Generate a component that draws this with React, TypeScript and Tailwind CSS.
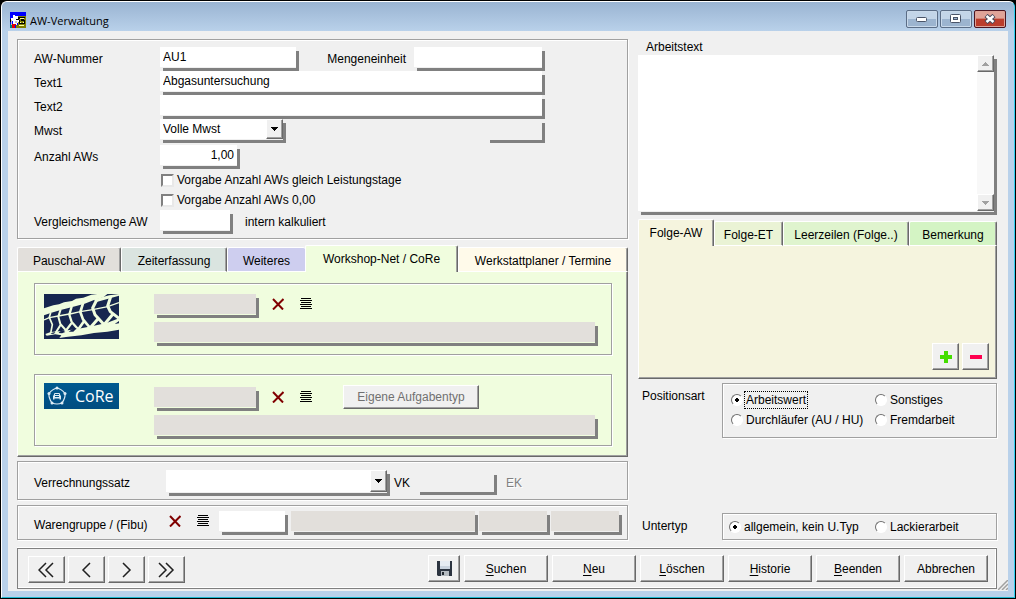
import { useState } from "react";
import type { ReactNode } from "react";

const group =
  "border border-[#a0a0a0] shadow-[1px_1px_0_#fff,inset_1px_1px_0_#fff]";
const raised =
  "border border-t-white border-l-white border-r-[#696969] border-b-[#696969] bg-[#f0f0f0] shadow-[inset_-1px_-1px_0_#a0a0a0]";
const field =
  "h-5 min-w-0 px-[3px] leading-5 outline-none shadow-[0_1px_0_#f0f0f0,3px_4px_0_#808080]";
const fieldGreen =
  "h-5 min-w-0 bg-[#e2dfdb] px-[3px] outline-none shadow-[0_1px_0_#f0fdde,3px_4px_0_#808080]";

function TitleIcon() {
  return (
    <svg width="16" height="16" viewBox="0 0 16 16" shapeRendering="crispEdges">
      <rect width="16" height="16" fill="#0000ff" />
      <path d="M8 4h8v12H6v-3h2z" fill="#808000" />
      <path d="M3 3h2v1h3v1h1v5H8v1H7v2H3V9H1V6h2z" fill="#fff" />
      <path d="M0 12h2v4H0z" fill="#008080" />
      <path d="M1 8h1v5H1zM5 9h2v2H5z" fill="#c0c0c0" />
      <path d="M2 12h4v1H5v3H2z" fill="#e00000" />
      <path
        d="M8 5h7v1h-5v1H8zM6 7h3v1H6zM9 8h1v3h4V8h1v4H9zM11 7h3v2h-3zM0 7h1v3H0z"
        fill="#000"
      />
      <path d="M10 6h4v1h-4zM10 10h1v1h-1zM13 10h1v1h-1zM9 13h5v1H9z" fill="#ffffa0" />
    </svg>
  );
}

function TyreLogo() {
  return (
    <svg width="75" height="45" viewBox="0 0 225 135" className="shrink-0">
      <rect width="225" height="135" fill="#16264f" />
      <g fill="#f0fdde">
        <path d="M0 43L28 34L45 31L60 25L84 21L96 14L118 11L142 2L160 0H190L178 10L150 18L122 29L88 38L50 48L20 57L0 64Z" />
        <path d="M150 16L196 4L225 0V5L198 13L155 25Z" />
        <path d="M4 120L20 114L60 110L100 105L150 95L190 86L225 73V81L212 90L225 88V107L190 113L150 117L112 124L66 129L46 132L52 124L34 121L8 125Z" />
      </g>
      <g fill="none" stroke="#f0fdde" strokeWidth="8" strokeLinejoin="round">
        <path d="M20 56L16 70L25 92L20 118" strokeWidth="5" />
        <path d="M50 46L43 68L49 90L72 116M50 92L34 118" strokeWidth="6" />
        <path d="M83 38L76 62L83 84L108 112M82 88L64 112" strokeWidth="7" />
        <path d="M117 28L109 54L117 76L141 105M120 82L100 110" />
        <path d="M158 18L146 42L153 62L184 96M161 76L136 104" strokeWidth="9" />
        <path d="M200 8L191 36L199 53L225 73M207 60L182 90" strokeWidth="9" />
        <path d="M0 78L16 71L43 66L76 60M78 60L109 53L146 47M150 46L191 38L225 26" strokeWidth="4" />
      </g>
      <g fill="#16264f">
        <path d="M24 116L34 114L30 119L20 120Z" />
        <path d="M48 112L58 110L64 114L54 118L44 117Z" />
        <path d="M84 106L98 103L88 113L74 113Z" />
      </g>
    </svg>
  );
}

function CoReLogo() {
  return (
    <div className="flex h-[26px] w-[75px] shrink-0 items-center gap-2 bg-linear-to-b from-[#005a90] to-[#004c80] pl-[3px] text-white">
      <svg
        width="20"
        height="20"
        viewBox="0 0 20 20"
        fill="none"
        stroke="#dcebf5"
        className="shrink-0"
      >
        <path
          d="M10 2Q14.500 3 18 7.500Q18.500 12 15 17Q10 19 5 17Q1.500 12 2 7.500Q5.500 3 10 2Z"
          strokeWidth="1.200"
        />
        <g fill="#dcebf5" stroke="none">
          <circle cx="10" cy="2" r="1.500" />
          <circle cx="18" cy="7.500" r="1.500" />
          <circle cx="15" cy="17" r="1.500" />
          <circle cx="5" cy="17" r="1.500" />
          <circle cx="2" cy="7.500" r="1.500" />
          <path d="M7.500 7H12.500L13.500 9.500L14 10V13.500H12.500V12.500H7.500V13.500H6V10L6.500 9.500Z" />
        </g>
        <path d="M8 8.500H12M8 10.500H12" stroke="#00558b" />
      </svg>
      <span className="font-['Open_Sans',sans-serif] text-base leading-6">CoRe</span>
    </div>
  );
}

function ClearButton() {
  return (
    <button aria-label="Auswahl löschen" className="shrink-0">
      <svg width="12" height="12" viewBox="0 0 12 12" fill="none" stroke="#800000">
        <path d="M1 1L11 11.500M11.500 1L1 11.500" strokeWidth="2" />
      </svg>
    </button>
  );
}

function ListButton() {
  return (
    <button aria-label="Auswahlliste" className="shrink-0">
      <svg width="12" height="12" viewBox="0 0 12 12" shapeRendering="crispEdges">
        <path
          d="M1 0h10v1H1zM0 2h12v1H0zM1 4h10v1H1zM0 6h12v1H0zM1 8h10v1H1zM0 10h12v1H0z"
          fill="#000"
        />
      </svg>
    </button>
  );
}

function Arrow({ up, color }: { up?: boolean; color: string }) {
  return (
    <svg width="7" height="4" viewBox="0 0 7 4" shapeRendering="crispEdges" fill={color}>
      <path d={up ? "M3 0h1v1h1v1h1v1h1v1H0V3h1V2h1V1h1z" : "M0 0h7v1H6v1H5v1H4v1H3V3H2V2H1V1H0z"} />
    </svg>
  );
}

interface ComboProps {
  id: string;
  options: string[];
  className: string;
}

function Combo({ id, options, className }: ComboProps) {
  return (
    <div
      className={`relative shrink-0 bg-white shadow-[0_1px_0_#f0f0f0,3px_4px_0_#808080] ${className}`}
    >
      <select id={id} className="h-full w-full appearance-none pr-5 pl-[3px] outline-none">
        {options.map((o) => (
          <option key={o}>{o}</option>
        ))}
      </select>
      <span
        className={`pointer-events-none absolute inset-y-0 right-0 flex w-[17px] items-center justify-center ${raised}`}
      >
        <Arrow color="#000" />
      </span>
    </div>
  );
}

interface Tab {
  label: string;
  color: string;
}

function Tabs({ tabs, active, cols }: { tabs: Tab[]; active: string; cols: string }) {
  const [current, setCurrent] = useState(active);
  return (
    <div role="tablist" className={`grid h-[27px] items-end ${cols}`}>
      {tabs.map((tab) => {
        const on = tab.label === current;
        return (
          <button
            key={tab.label}
            role="tab"
            aria-selected={on}
            onClick={() => setCurrent(tab.label)}
            className={`rounded-t-[2px] border-t border-l border-white whitespace-nowrap ${tab.color} ${
              on ? "h-[27px]" : "h-[25px] border-b pt-0.5"
            } ${
              tab.label === "Weiteres"
                ? ""
                : "border-r border-r-[#696969] shadow-[inset_-1px_0_0_#a0a0a0]"
            }`}
          >
            {tab.label}
          </button>
        );
      })}
    </div>
  );
}

const panel =
  "border border-t-0 border-l-white border-r-[#696969] border-b-[#696969] shadow-[inset_-1px_-1px_0_#a0a0a0]";

function Check({ id, children }: { id: string; children: ReactNode }) {
  return (
    <div className="ml-[127px] flex h-5 items-center gap-[3px]">
      <input
        id={id}
        type="checkbox"
        className="size-[13px] appearance-none border-2 border-t-[#808080] border-r-[#e8e8e8] border-b-[#e8e8e8] border-l-[#808080] bg-white checked:bg-black"
      />
      <label htmlFor={id}>{children}</label>
    </div>
  );
}

interface RadioProps {
  name: string;
  label: string;
  checked?: boolean;
  focused?: boolean;
}

function Radio({ name, label, checked, focused }: RadioProps) {
  return (
    <label className="flex h-5 items-center gap-px whitespace-nowrap">
      <input
        type="radio"
        name={name}
        defaultChecked={checked}
        className="size-3 shrink-0 appearance-none rounded-full border border-t-[#707070] border-r-[#fff] border-b-[#fff] border-l-[#707070] bg-white checked:bg-[radial-gradient(circle,#000_2px,#fff_2px)]"
      />
      <span
        className={
          focused
            ? "border border-dotted border-black px-px leading-4"
            : "border border-transparent px-px leading-4"
        }
      >
        {label}
      </span>
    </label>
  );
}

function NavButton({ label, path }: { label: string; path: string }) {
  return (
    <button aria-label={label} className={`flex h-[27px] w-[37px] items-center justify-center ${raised}`}>
      <svg width="18" height="16" viewBox="0 0 18 16" fill="none" stroke="#202020" strokeWidth="1.500">
        <path d={path} />
      </svg>
    </button>
  );
}

const caption =
  "flex h-[18px] w-8 items-center justify-center rounded-[2px] border border-[#5b6d86] bg-linear-to-b from-[#c3d5e8] from-50% to-[#9cb4cf] to-50% shadow-[inset_0_0_0_1px_#c9d9ea]";

const leftTabs: Tab[] = [
  { label: "Pauschal-AW", color: "bg-[#e2dfdb]" },
  { label: "Zeiterfassung", color: "bg-[#dae4e0]" },
  { label: "Weiteres", color: "bg-[#ceceef]" },
  { label: "Workshop-Net / CoRe", color: "bg-[#f0fdde]" },
  { label: "Werkstattplaner / Termine", color: "bg-[#fffaea]" },
];

const rightTabs: Tab[] = [
  { label: "Folge-AW", color: "bg-[#f5f4de]" },
  { label: "Folge-ET", color: "bg-[#eaf3d5]" },
  { label: "Leerzeilen (Folge..)", color: "bg-[#dff4ce]" },
  { label: "Bemerkung", color: "bg-[#d4f4c4]" },
];

const actions = ["Suchen", "Neu", "Löschen", "Historie", "Beenden"];

function TitleBar() {
  return (
    <header className="flex h-[29px] items-start bg-linear-to-b from-[#9ab4d2] to-[#b9d1ea] pt-2 pr-2">
      <div className="ml-2 flex items-center gap-1 pt-px">
        <TitleIcon />
        <h1 className="pt-0.5 font-['Open_Sans','Noto_Sans',sans-serif] text-[11px] leading-4">AW-Verwaltung</h1>
      </div>
      <div className="ml-auto flex gap-0.5">
        <button aria-label="Minimieren" className={caption}>
          <svg width="12" height="6" viewBox="0 0 12 6">
            <rect x="0.500" y="1.500" width="10" height="4" rx="1" fill="#fff" stroke="#4a5468" />
          </svg>
        </button>
        <button aria-label="Maximieren" className={caption}>
          <svg width="12" height="10" viewBox="0 0 12 10">
            <rect x="0.500" y="0.500" width="10" height="8" rx="1" fill="#fff" stroke="#4a5468" />
            <rect x="3.500" y="3.500" width="4" height="2" fill="#9cb4cf" stroke="#4a5468" />
          </svg>
        </button>
        <button
          aria-label="Schließen"
          className="flex h-[18px] w-8 items-center justify-center rounded-[2px] border border-[#4c1420] bg-linear-to-b from-[#e0a398] from-45% to-[#bb3d2c] to-50% shadow-[inset_0_0_0_1px_#dda398]"
        >
          <svg width="12" height="10" viewBox="0 0 12 10" fill="none">
            <path d="M2 1.500L10 8.500M10 1.500L2 8.500" stroke="#4a4a5c" strokeWidth="4.500" />
            <path d="M2.500 2L9.500 8M9.500 2L2.500 8" stroke="#fff" strokeWidth="2.500" />
          </svg>
        </button>
      </div>
    </header>
  );
}

function MasterData() {
  return (
    <section className={`flex flex-col pt-[7px] pr-[85px] pb-1 pl-4 ${group}`}>
      <div className="flex h-6">
        <label htmlFor="nummer" className="w-[126px] leading-6">AW-Nummer</label>
        <input id="nummer" defaultValue="AU1" className={`w-[136px] bg-white ${field}`} />
        <div className="ml-auto flex gap-2">
          <label htmlFor="einheit" className="leading-6">Mengeneinheit</label>
          <input id="einheit" className={`w-32 bg-white ${field}`} />
        </div>
      </div>
      <div className="flex h-6">
        <label htmlFor="text1" className="w-[126px] leading-6">Text1</label>
        <input id="text1" defaultValue="Abgasuntersuchung" className={`flex-1 bg-white ${field}`} />
      </div>
      <div className="flex h-6">
        <label htmlFor="text2" className="w-[126px] leading-6">Text2</label>
        <input id="text2" className={`flex-1 bg-white ${field}`} />
      </div>
      <div className="mb-0.5 flex h-6">
        <label htmlFor="mwst" className="w-[126px] leading-6">Mwst</label>
        <Combo id="mwst" options={["Volle Mwst"]} className="h-5 w-[123px]" />
        <input aria-label="Mwst-Satz" readOnly className={`ml-auto w-[55px] bg-[#f0f0f0] ${field}`} />
      </div>
      <div className="mb-px flex h-6">
        <label htmlFor="anzahl" className="w-[126px] leading-6">Anzahl AWs</label>
        <input id="anzahl" defaultValue="1,00" className={`w-[77px] bg-white text-right ${field}`} />
      </div>
      <Check id="leistungstage">Vorgabe Anzahl AWs gleich Leistungstage</Check>
      <Check id="nullmenge">Vorgabe Anzahl AWs 0,00</Check>
      <div className="flex h-6">
        <label htmlFor="vergleich" className="w-[126px] leading-6">Vergleichsmenge AW</label>
        <input id="vergleich" className={`w-[70px] bg-white ${field}`} />
        <span className="ml-[15px] leading-6">intern kalkuliert</span>
      </div>
    </section>
  );
}

function WorkshopNet() {
  return (
    <div>
      <Tabs
        tabs={leftTabs}
        active="Workshop-Net / CoRe"
        cols="grid-cols-[104fr_106fr_78fr_153fr_170fr]"
      />
      <div className={`flex flex-col gap-[19px] bg-[#f0fdde] pt-[11px] pr-[15px] pb-2.5 pl-4 ${panel}`}>
        <div className={`flex h-[72px] gap-[35px] pt-2.5 pr-4 pl-[9px] ${group}`}>
          <TyreLogo />
          <div className="flex flex-1 flex-col gap-2">
            <div className="flex items-center gap-4">
              <input aria-label="Workshop-Net Nummer" readOnly className={`w-[102px] ${fieldGreen}`} />
              <ClearButton />
              <ListButton />
            </div>
            <input aria-label="Workshop-Net Text" readOnly className={fieldGreen} />
          </div>
        </div>
        <div className={`flex h-[72px] gap-[35px] pt-2 pr-4 pl-[9px] ${group}`}>
          <CoReLogo />
          <div className="flex flex-1 flex-col gap-1">
            <div className="flex h-7 items-center gap-4">
              <input
                aria-label="CoRe Nummer"
                readOnly
                className={`w-[102px] ${fieldGreen}`}
              />
              <ClearButton />
              <ListButton />
              <button disabled className={`ml-[15px] h-6 w-[136px] text-[#707070] ${raised}`}>
                Eigene Aufgabentyp
              </button>
            </div>
            <input aria-label="CoRe Text" readOnly className={fieldGreen} />
          </div>
        </div>
      </div>
    </div>
  );
}

function ScrollButton({ up }: { up?: boolean }) {
  return (
    <button
      aria-label={up ? "Nach oben" : "Nach unten"}
      className={`flex h-[17px] items-center justify-center ${raised}`}
    >
      <Arrow up={up} color="#a0a0a0" />
    </button>
  );
}

function Details() {
  return (
    <div className="flex flex-col">
      <label htmlFor="arbeitstext" className="-mt-1 h-5 pl-2 leading-6">Arbeitstext</label>
      <div className="mr-[3px] flex h-[156px] bg-white shadow-[0_1px_0_#f0f0f0,3px_4px_0_#808080]">
        <textarea id="arbeitstext" className="min-w-0 flex-1 resize-none p-1 outline-none" />
        <div className="flex w-[17px] flex-col justify-between bg-[#f8f8f8]">
          <ScrollButton up />
          <ScrollButton />
        </div>
      </div>

      <div className="mt-2">
        <Tabs tabs={rightTabs} active="Folge-AW" cols="grid-cols-[76fr_69fr_126fr_88fr]" />
        <div className={`flex h-[133px] items-end justify-end gap-[3px] bg-[#f5f4de] pr-[7px] pb-2 ${panel}`}>
          <button aria-label="Hinzufügen" className={`flex size-[27px] items-center justify-center ${raised}`}>
            <svg width="12" height="12" viewBox="0 0 12 12">
              <path d="M4 0h4v4h4v4H8v4H4V8H0V4h4z" fill="#44dd00" />
            </svg>
          </button>
          <button aria-label="Entfernen" className={`flex size-[27px] items-center justify-center ${raised}`}>
            <svg width="12" height="12" viewBox="0 0 12 12">
              <path d="M0 4h12v4H0z" fill="#ff0050" />
            </svg>
          </button>
        </div>
      </div>

      <div role="radiogroup" aria-labelledby="posart" className="mt-1 flex">
        <span id="posart" className="w-[84px] pt-px pl-1 leading-6">Positionsart</span>
        <div
          className={`grid h-[55px] flex-1 grid-cols-[144px_1fr] content-start pt-1.5 pl-2 ${group}`}
        >
          <Radio name="posart" label="Arbeitswert" checked focused />
          <Radio name="posart" label="Sonstiges" />
          <Radio name="posart" label="Durchläufer (AU / HU)" />
          <Radio name="posart" label="Fremdarbeit" />
        </div>
      </div>

      <div role="radiogroup" aria-labelledby="untertyp" className="mt-auto flex">
        <span id="untertyp" className="w-[84px] pt-px pl-1 leading-6">Untertyp</span>
        <div className={`grid h-[27px] flex-1 grid-cols-[146px_1fr] items-center pl-1.5 ${group}`}>
          <Radio name="untertyp" label="allgemein, kein U.Typ" checked />
          <Radio name="untertyp" label="Lackierarbeit" />
        </div>
      </div>
    </div>
  );
}

export default function App() {
  return (
    <div className="flex min-h-screen flex-col bg-black pl-px font-['Liberation_Sans',Arial,sans-serif] text-xs text-black">
      <div className="mt-px mr-px mb-px flex flex-1 flex-col overflow-hidden rounded-t-md border border-t-white border-r-[#30d0f0] border-b-[#20b8d0] border-l-white bg-[#b9d1ea]">
        <TitleBar />
        <main className="mx-1.5 mb-1.5 flex flex-1 flex-col bg-[#f0f0f0] pt-2 pl-[9px]">
          <div className="grid grid-cols-[611fr_359fr] gap-2.5 pr-[11px]">
            <div className="flex min-w-0 flex-col">
              <MasterData />
              <div className="mt-1.5">
                <WorkshopNet />
              </div>

              <section className={`mt-1 flex h-[39px] items-center pl-4 ${group}`}>
                <label htmlFor="satz" className="w-[132px] pt-1">Verrechnungssatz</label>
                <Combo id="satz" options={[""]} className="h-[22px] w-[221px]" />
                <label htmlFor="vk" className="w-[30px] pt-1 pl-[7px]">VK</label>
                <input id="vk" readOnly className={`w-[77px] bg-[#f0f0f0] ${field}`} />
                <span className="ml-3 pt-1 text-[#808080] [text-shadow:1px_1px_0_#fff]">EK</span>
              </section>

              <section className={`mt-[5px] flex h-[35px] items-start gap-1 pt-[5px] pr-2 pl-4 ${group}`}>
                <label htmlFor="gruppe" className="w-[131px] pt-0.5 leading-6">Warengruppe / (Fibu)</label>
                <div className="flex h-5 w-[46px] items-center gap-4">
                  <ClearButton />
                  <ListButton />
                </div>
                <div className="flex flex-1 gap-1">
                  <input id="gruppe" className={`mr-0.5 w-[66px] bg-white ${field}`} />
                  <input aria-label="Bezeichnung" readOnly className={`flex-1 bg-[#e2dfdb] ${field}`} />
                  <input aria-label="Fibu Erlös" readOnly className={`w-[68px] bg-[#e2dfdb] ${field}`} />
                  <input aria-label="Fibu Aufwand" readOnly className={`w-[68px] bg-[#e2dfdb] ${field}`} />
                </div>
              </section>
            </div>

            <Details />
          </div>

          <footer className="mt-2 mr-[11px] mb-0.5 flex h-[41px] items-start justify-between border border-[#808080] pt-1.5 pr-2 pl-2.5 shadow-[0_-1px_0_#fff,inset_-1px_-1px_0_#fff]">
            <nav className="flex gap-[3px] pt-px">
              <NavButton label="Erster" path="M8 1L1 8L8 15M15 1L8 8L15 15" />
              <NavButton label="Zurück" path="M12 1L5 8L12 15" />
              <NavButton label="Weiter" path="M5 1L12 8L5 15" />
              <NavButton label="Letzter" path="M1 1L8 8L1 15M8 1L15 8L8 15" />
            </nav>
            <div className="flex gap-1">
              <button
                aria-label="Speichern"
                className={`flex h-[27px] w-8 items-center justify-center ${raised}`}
              >
                <svg width="15" height="15" viewBox="0 0 15 15">
                  <path d="M0 0h15v15H1L0 14z" fill="#2c3440" />
                  <path d="M3 0h10v8H3z" fill="#e6ecf2" />
                  <path d="M3 5h10v3H3z" fill="#c9d3de" />
                  <path d="M4 10h8v5H4z" fill="#b4bac0" />
                  <path d="M5 11h2v3H5z" fill="#20262e" />
                </svg>
              </button>
              {actions.map((a) => (
                <button key={a} className={`h-[27px] w-[84px] ${raised}`}>
                  <span className="underline underline-offset-2">{a[0]}</span>
                  {a.slice(1)}
                </button>
              ))}
              <button className={`h-[27px] w-[84px] ${raised}`}>Abbrechen</button>
            </div>
          </footer>
          <svg
            width="10"
            height="10"
            viewBox="0 0 10 10"
            stroke="#a0a0a0"
            className="-mt-[11px] mb-px self-end"
          >
            <path d="M0 10L10 0M4 10L10 4M8 10L10 8" strokeWidth="1.500" />
          </svg>
        </main>
      </div>
    </div>
  );
}
